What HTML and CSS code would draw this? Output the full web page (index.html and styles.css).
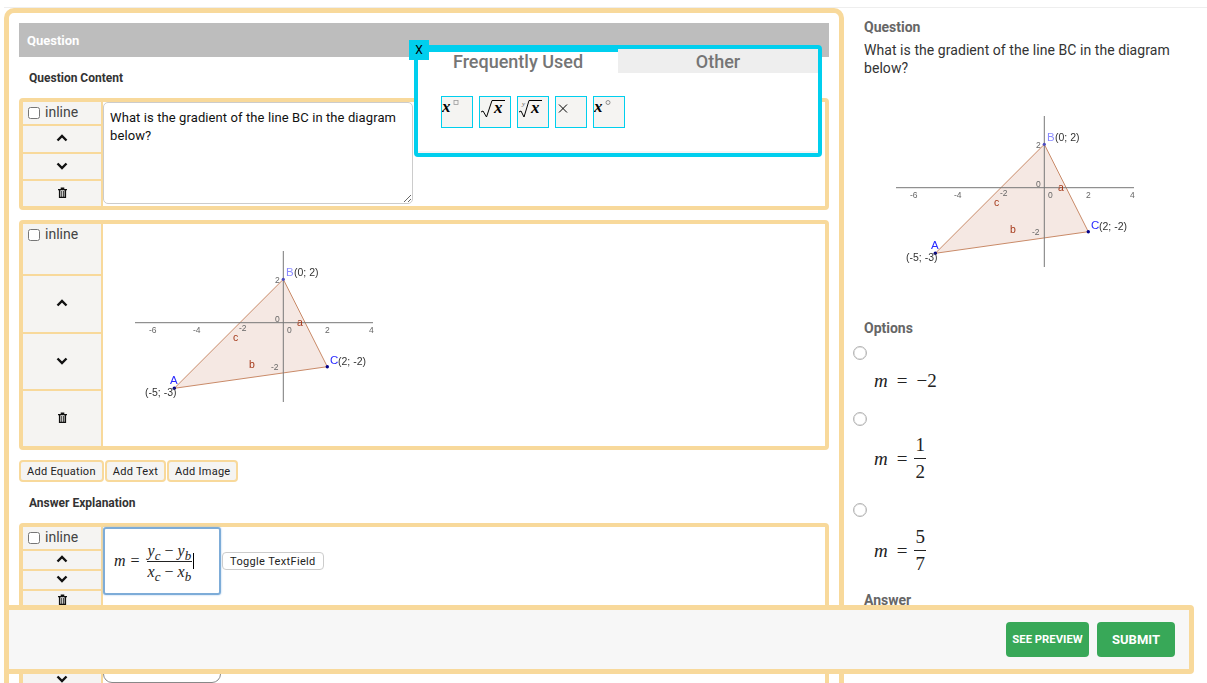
FILE: index.html
```html
<!DOCTYPE html>
<html lang="en">

<head>
  <meta charset="UTF-8">
  <title>Question editor</title>
  <link rel="stylesheet" href="styles.css">
</head>

<body>
  <!-- shared icons -->
  <svg class="defs" aria-hidden="true">
    <symbol id="up" viewBox="0 0 12 8"><path d="M1.5 6.5 6 2l4.5 4.5" fill="none" stroke="#111" stroke-width="2.4"/></symbol>
    <symbol id="down" viewBox="0 0 12 8"><path d="M1.5 1.5 6 6l4.5-4.5" fill="none" stroke="#111" stroke-width="2.4"/></symbol>
    <symbol id="trash" viewBox="0 0 10 12"><path d="M3 2V.4h4V2h3v1.4H9V12H1V3.4H0V2zM2.6 3.4v7.2h1.1V4.4h.9v6.2h.9V4.4h.9v6.2h.9V3.4z" fill="#111"/></symbol>
  </svg>

  <div class="page">
    <main class="editor">
      <h2 class="bar">Question</h2>
      <h3 class="label">Question Content</h3>

      <div class="block">
        <div class="side side-text">
          <div class="cell cell-top"><input type="checkbox"><span>inline</span></div>
          <div class="cell"><svg class="ico"><use href="#up"/></svg></div>
          <div class="cell"><svg class="ico"><use href="#down"/></svg></div>
          <div class="cell"><svg class="ico-trash"><use href="#trash"/></svg></div>
        </div>
        <textarea class="text-input" spellcheck="false">What is the gradient of the line BC in the diagram below?</textarea>
      </div>

      <div class="block">
        <div class="side side-image">
          <div class="cell cell-top"><input type="checkbox"><span>inline</span></div>
          <div class="cell"><svg class="ico"><use href="#up"/></svg></div>
          <div class="cell"><svg class="ico"><use href="#down"/></svg></div>
          <div class="cell"><svg class="ico-trash"><use href="#trash"/></svg></div>
        </div>
        <div class="image-wrap">
          <svg class="diagram" viewBox="0 0 280 170">
            <path d="M173.3 39.3 217.3 126.7 64.3 148.3z" fill="#f5e8e3" stroke="#c98a68"/>
            <path d="M25 82.7H263M173.3 11V162" stroke="#777" fill="none"/>
            <g class="ticks">
              <text x="39" y="93">-6</text><text x="83" y="93">-4</text><text x="129" y="91">-2</text>
              <text x="177" y="93">0</text><text x="215" y="93">2</text><text x="259" y="93">4</text>
              <text x="165" y="82">0</text><text x="165" y="43">2</text><text x="161" y="130">-2</text>
            </g>
            <circle cx="173.3" cy="39.3" r="1.6" fill="#4d4dc0"/>
            <circle cx="217.3" cy="126.7" r="1.7" fill="#00008b"/>
            <circle cx="64.3" cy="148.3" r="1.7" fill="#00008b"/>
            <g class="seg"><text x="187" y="86">a</text><text x="139" y="128">b</text><text x="123" y="101">c</text></g>
            <g class="pts">
              <text class="pt-light" x="176" y="36">B</text><text x="184" y="36">(0; 2)</text>
              <text class="pt-blue" x="220" y="124">C</text><text x="228" y="125">(2; -2)</text>
              <text class="pt-blue" x="60" y="144">A</text><text x="35" y="156">(-5; -3)</text>
            </g>
          </svg>
        </div>
      </div>

      <div class="adders">
        <button>Add Equation</button>
        <button>Add Text</button>
        <button>Add Image</button>
      </div>

      <h3 class="label label-answer">Answer Explanation</h3>

      <div class="block">
        <div class="side side-eq">
          <div class="cell cell-top"><input type="checkbox"><span>inline</span></div>
          <div class="cell"><svg class="ico"><use href="#up"/></svg></div>
          <div class="cell"><svg class="ico"><use href="#down"/></svg></div>
          <div class="cell"><svg class="ico-trash"><use href="#trash"/></svg></div>
        </div>
        <div class="eq-row">
          <div class="math-field">
            <span class="math"><i>m</i><span class="eq">=</span>
              <span class="frac frac-big">
                <span class="num"><i>y<sub>c</sub></i> − <i>y<sub>b</sub></i></span>
                <span class="den"><i>x<sub>c</sub></i> − <i>x<sub>b</sub></i></span>
              </span><span class="caret"></span>
            </span>
          </div>
          <button class="toggle">Toggle TextField</button>
        </div>
      </div>

      <div class="block">
        <div class="side side-eq">
          <div class="cell cell-top"><input type="checkbox"><span>inline</span></div>
          <div class="cell"><svg class="ico"><use href="#up"/></svg></div>
          <div class="cell"><svg class="ico"><use href="#down"/></svg></div>
          <div class="cell"><svg class="ico-trash"><use href="#trash"/></svg></div>
        </div>
        <div class="empty-field"></div>
      </div>
    </main>

    <aside class="preview">
      <h4>Question</h4>
      <p>What is the gradient of the line BC in the diagram below?</p>
      <svg class="diagram diagram-preview" viewBox="0 0 280 170">
        <path d="M173.3 39.3 217.3 126.7 64.3 148.3z" fill="#f5e8e3" stroke="#c98a68"/>
        <path d="M25 82.7H263M173.3 11V162" stroke="#777" fill="none"/>
        <g class="ticks">
          <text x="39" y="93">-6</text><text x="83" y="93">-4</text><text x="129" y="91">-2</text>
          <text x="177" y="93">0</text><text x="215" y="93">2</text><text x="259" y="93">4</text>
          <text x="165" y="82">0</text><text x="165" y="43">2</text><text x="161" y="130">-2</text>
        </g>
        <circle cx="173.3" cy="39.3" r="1.6" fill="#4d4dc0"/>
        <circle cx="217.3" cy="126.7" r="1.7" fill="#00008b"/>
        <circle cx="64.3" cy="148.3" r="1.7" fill="#00008b"/>
        <g class="seg"><text x="187" y="86">a</text><text x="139" y="128">b</text><text x="123" y="101">c</text></g>
        <g class="pts">
          <text class="pt-light" x="176" y="36">B</text><text x="184" y="36">(0; 2)</text>
          <text class="pt-blue" x="220" y="124">C</text><text x="228" y="125">(2; -2)</text>
          <text class="pt-blue" x="60" y="144">A</text><text x="35" y="156">(-5; -3)</text>
        </g>
      </svg>
      <h4 class="options-title">Options</h4>

      <div class="radio"></div>
      <div class="math option option-one"><i>m</i><span class="eq">=</span>−2</div>

      <div class="radio radio-two"></div>
      <div class="math option option-two"><i>m</i><span class="eq">=</span>
        <span class="frac"><span class="num">1</span><span class="den">2</span></span>
      </div>

      <div class="radio radio-three"></div>
      <div class="math option option-three"><i>m</i><span class="eq">=</span>
        <span class="frac"><span class="num">5</span><span class="den">7</span></span>
      </div>

      <h4 class="answer-title">Answer</h4>
    </aside>
  </div>

  <!-- equation picker -->
  <div class="picker">
    <button class="picker-close">X</button>
    <div class="tabs">
      <div class="tab tab-active">Frequently Used</div>
      <div class="tab">Other</div>
    </div>
    <div class="symbols">
      <button>
        <svg viewBox="0 0 30 30"><text class="mx" x="0" y="15">x</text><rect x="12" y="3.5" width="4" height="4" fill="none" stroke="#999" stroke-width=".8"/></svg>
      </button>
      <button>
        <svg viewBox="0 0 30 30"><path d="M1 15l2-1 3.5 6L12 3.5h13" fill="none" stroke="#000"/><text class="mx" x="14" y="16">x</text></svg>
      </button>
      <button>
        <svg viewBox="0 0 30 30"><path d="M1 15l2-1 3 6L11 3.5h13" fill="none" stroke="#000"/><text class="my" x="4" y="9">y</text><text class="mx" x="13" y="16">x</text></svg>
      </button>
      <button>
        <svg viewBox="0 0 30 30"><path d="M3 7.5l8 8M11 7.5l-8 8" fill="none" stroke="#000"/></svg>
      </button>
      <button>
        <svg viewBox="0 0 30 30"><text class="mx" x="0" y="15">x</text><circle cx="14" cy="5.5" r="2" fill="none" stroke="#777" stroke-width=".8"/></svg>
      </button>
    </div>
  </div>

  <footer class="actions">
    <button class="btn btn-small">SEE PREVIEW</button>
    <button class="btn btn-submit">SUBMIT</button>
  </footer>
</body>

</html>
```

FILE: styles.css
```css
* {
  box-sizing: border-box;
}

html, body {
  height: 100%;
  overflow: hidden;
}

body {
  margin: 0;
  font-family: Roboto, sans-serif;
  color: #333;
  background: #fff;
}

button {
  font-family: inherit;
  cursor: pointer;
}

.defs {
  position: absolute;
  width: 0;
  height: 0;
}

.page {
  display: flex;
  align-items: flex-start;
  height: 676px;
  margin: 7px 0 0 4px;
  padding-top: 1px;
  overflow: hidden;
  background: linear-gradient(#eee, #eee) no-repeat 0 0 / 100% 1px;
}

/* left column */
.editor {
  flex: none;
  width: 840px;
  height: 760px;
  padding: 10px;
  border: 5px solid #f8d99b;
  border-radius: 10px;
}

.bar {
  height: 34px;
  margin: 0;
  padding-left: 8px;
  background: #bdbdbd;
  color: #fff;
  font-size: 13px;
  font-weight: 700;
  line-height: 35px;
}

.label {
  margin: 14px 0 13px 10px;
  font-size: 12px;
  font-weight: 700;
  line-height: 14px;
}

.block {
  display: flex;
  margin-bottom: 10px;
  border: 4px solid #f8d99b;
  border-radius: 4px;
}

.side {
  display: grid;
  flex: none;
  gap: 2px;
  width: 80px;
  border-right: 2px solid #f8d99b;
  background: #f8d99b;
}

.side-text { grid-template-rows: 22px 26px 25px 25px; }
.side-image { grid-template-rows: 50px 56px 55px 55px; }
.side-eq { grid-template-rows: 22px 18px 18px 18px; }

.cell {
  display: flex;
  align-items: center;
  justify-content: center;
  padding-bottom: 2px;
  background: #f5f4f2;
}

.cell-top {
  align-items: flex-start;
  justify-content: flex-start;
  height: 22px;
  padding: 0 0 0 5px;
  font-size: 14px;
  line-height: 20px;
  color: #444;
}

.side-image .cell-top {
  height: auto;
}

.cell-top input {
  width: 12px;
  height: 12px;
  margin: 5px 5px 0 0;
}

.ico {
  width: 12px;
  height: 8px;
}

.ico-trash {
  width: 9px;
  height: 11px;
}

.text-input {
  display: block;
  width: 310px;
  height: 102px;
  padding: 6px;
  border: 1px solid #ccc;
  border-radius: 5px;
  font: 13px/18px Roboto, sans-serif;
  letter-spacing: .1px;
  color: #111;
}

.image-wrap {
  padding: 16px 7px;
}

.diagram {
  display: block;
  width: 280px;
  height: 170px;
  filter: blur(.35px);
}

.ticks text {
  font: 8.5px "Liberation Sans", sans-serif;
  fill: #666;
}

.seg text {
  font: 10.5px "Liberation Sans", sans-serif;
  fill: #a5391a;
}

.pts text {
  font: 10.5px "Liberation Sans", sans-serif;
  fill: #333;
}

.pts .pt-light {
  font-size: 11.5px;
  fill: #8a8aff;
}

.pts .pt-blue {
  font-size: 11.5px;
  fill: #2a2aff;
}

.adders {
  display: flex;
  gap: 1px;
}

.adders button {
  height: 22px;
  padding: 0 6px;
  border: 2px solid #f8d99b;
  border-radius: 4px;
  background: #f5f4f2;
  font-size: 11px;
  letter-spacing: .28px;
  color: #222;
}

.eq-row {
  display: flex;
  align-items: center;
  height: 68px;
}

.math-field {
  display: flex;
  align-items: center;
  width: 118px;
  height: 68px;
  padding-left: 9px;
  border: 2px solid #7dacd8;
  border-radius: 3px;
  box-shadow: 0 0 2px #9cc3e6;
}

.toggle {
  height: 18px;
  margin-left: 1px;
  padding: 0 7px;
  border: 1px solid #ccc;
  border-radius: 4px;
  background: #fff;
  font-size: 11px;
  letter-spacing: .35px;
  color: #222;
}

.empty-field {
  width: 118px;
  height: 56px;
  border: 1px solid #888;
  border-radius: 9px;
}

/* math, set as text */
.math {
  display: inline-flex;
  align-items: center;
  font-family: "Liberation Serif", serif;
  font-size: 19px;
  color: #222;
  white-space: nowrap;
}

.math-field .math {
  font-size: 16px;
}

.eq {
  margin: 0 9px;
}

.math-field .eq {
  margin: 0 7px 0 5px;
}

.frac {
  display: inline-flex;
  flex-direction: column;
  align-items: center;
  line-height: 24px;
}

.frac .num {
  padding: 0 1px 1px;
  border-bottom: 1px solid #222;
}

.frac .den {
  padding-top: 1px;
}

.frac-big {
  font-size: 16px;
  line-height: 18px;
}

.frac-big sub {
  font-size: 13px;
  line-height: 0;
}

.caret {
  width: 1px;
  height: 16px;
  margin-left: 1px;
  background: #000;
}

/* right column */
.preview {
  flex: 1;
  padding: 11px 0 0 20px;
}

.preview h4 {
  margin: 0;
  font-size: 14px;
  font-weight: 700;
  line-height: 16px;
  color: #666;
}

.preview p {
  width: 320px;
  margin: 6px 0 0;
  font-size: 14px;
  letter-spacing: .06px;
  line-height: 18px;
}

.diagram-preview {
  margin: 28px 0 0 7px;
}

.preview .options-title {
  margin-top: 45px;
}

.radio {
  width: 14px;
  height: 14px;
  margin: 10px 0 0 -11px;
  border: 1px solid #b5b5b5;
  border-radius: 50%;
  box-shadow: inset 0 0 0 .5px #ccc;
}

.radio-two { margin-top: 20px; }
.radio-three { margin-top: 19px; }

.option {
  display: flex;
  margin: 10px 0 0 10px;
}

.option-one { height: 22px; }
.option-two { margin-top: 7px; }
.option-three { margin-top: 8px; }
.option-two .eq, .option-three .eq { margin-right: 7px; }

.preview .answer-title {
  margin-top: 16px;
}

/* picker, over the editor */
.picker {
  position: absolute;
  top: 45px;
  left: 414px;
  width: 408px;
  height: 112px;
  border: 4px solid #00cfee;
  border-radius: 4px;
  background: #fff;
  box-shadow: inset 0 -2px 0 #f5f5f5;
}

.picker-close {
  position: absolute;
  top: -9px;
  left: -9px;
  width: 20px;
  height: 20px;
  padding: 0;
  border: 0;
  background: #00cfee;
  font-size: 12px;
  color: #000;
}

.tabs {
  display: flex;
}

.tab {
  width: 200px;
  height: 24px;
  background: #eee;
  font-size: 18px;
  font-weight: 500;
  line-height: 25px;
  text-align: center;
  color: #757575;
}

.tab-active {
  background: #fff;
  border-top: 3px solid #00cfee;
  line-height: 19px;
}

.symbols {
  display: flex;
  gap: 6px;
  padding: 23px 0 0 23px;
}

.symbols button {
  width: 32px;
  height: 32px;
  padding: 0;
  border: 1px solid #00cfee;
  background: #f5f4f2;
}

.symbols svg {
  display: block;
  width: 30px;
  height: 30px;
}

.mx {
  font: italic 700 17px "Liberation Serif", serif;
}

.my {
  font: italic 7px "Liberation Serif", serif;
  fill: #555;
}

/* bar fixed at the bottom */
.actions {
  position: fixed;
  top: 605px;
  left: 4px;
  display: flex;
  align-items: center;
  justify-content: flex-end;
  gap: 8px;
  width: 1190px;
  height: 69px;
  padding-right: 14px;
  border: 5px solid #f8d99b;
  border-radius: 4px;
  background: #f7f7f7;
}

.btn {
  height: 35px;
  padding: 0;
  border: 0;
  border-radius: 4px;
  background: #38a858;
  font-weight: 700;
  color: #fff;
}

.btn-small {
  width: 83px;
  font-size: 11.3px;
}

.btn-submit {
  width: 78px;
  font-size: 13px;
}
```
